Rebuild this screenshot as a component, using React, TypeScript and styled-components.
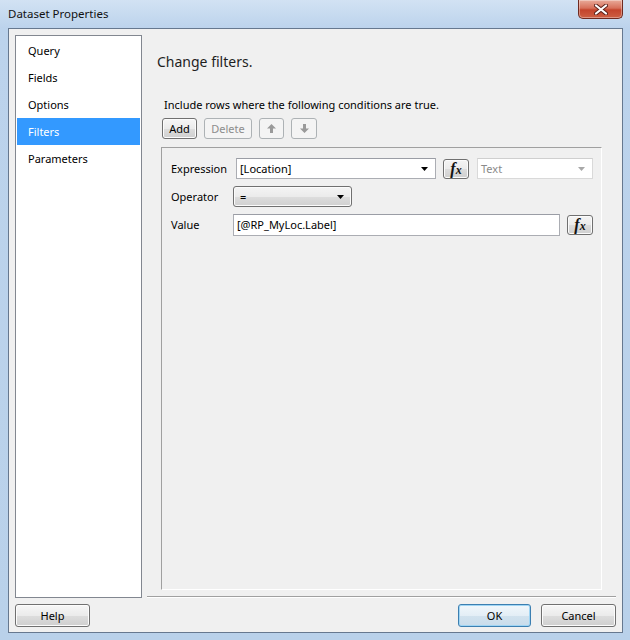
import styled, { createGlobalStyle } from "styled-components";

const GlobalStyle = createGlobalStyle`
  html, body {
    margin: 0;
    padding: 0;
  }

  body {
    width: 630px;
    height: 640px;
    overflow: hidden;
    background: #c3d8ee;
    font-family: "Noto Sans", "Segoe UI", "Liberation Sans", sans-serif;
    font-size: 11px;
    color: #000;
  }
`;

const Window = styled.div`
  box-sizing: border-box;
  width: 630px;
  height: 640px;
  display: flex;
  flex-direction: column;
  padding: 0 7px 7px 8px;
  background: linear-gradient(180deg, #d2e2f3 0px, #bcd3ec 28px, #b9d1ea 100%);
`;

const TitleBar = styled.div`
  height: 28px;
  display: flex;
  justify-content: space-between;
  align-items: flex-start;

  .title {
    margin-top: 6px;
    line-height: 16px;
    font-size: 11.5px;
    color: #111;
  }
`;

const CloseButton = styled.div`
  box-sizing: border-box;
  width: 45px;
  height: 19px;
  display: flex;
  align-items: center;
  justify-content: center;
  border: 1px solid #6f2a20;
  border-top: none;
  border-radius: 0 0 5px 5px;
  background: linear-gradient(180deg, #e9ab9a 0%, #d7705a 45%, #c4442c 55%, #cd5f43 100%);
  box-shadow: inset 0 0 0 1px rgba(255, 255, 255, 0.35);
`;

const Client = styled.div`
  flex: 1;
  display: flex;
  flex-direction: column;
  border: 1px solid #66788f;
  background: #f0f0f0;
  padding: 6px 6px 5px 6px;
  min-height: 0;
`;

const Main = styled.div`
  flex: 1;
  display: flex;
  min-height: 0;
`;

const Nav = styled.ul`
  box-sizing: border-box;
  flex-shrink: 0;
  width: 127px;
  margin: 0;
  padding: 1px;
  list-style: none;
  background: #fff;
  border: 1px solid #828790;
`;

const NavItem = styled.li<{ $active?: boolean }>`
  height: 27px;
  line-height: 27px;
  padding-left: 11px;
  background: ${(props) => (props.$active ? "#3399ff" : "transparent")};
  color: ${(props) => (props.$active ? "#fff" : "#000")};
`;

const Content = styled.div`
  flex: 1;
  min-width: 0;
  display: flex;
  flex-direction: column;
  margin-left: 5px;
`;

const Heading = styled.h1`
  margin: 17px 0 0 10px;
  font-size: 14px;
  font-weight: normal;
  line-height: 20px;
  color: #1e1e1e;
`;

const Section = styled.div`
  flex: 1;
  min-width: 0;
  display: flex;
  flex-direction: column;
  margin: 0 14px 0 14px;
`;

const Caption = styled.div`
  margin-top: 25px;
  padding-left: 3px;
  line-height: 16px;
`;

const Toolbar = styled.div`
  display: flex;
  gap: 7px;
  margin-top: 5px;
  padding-left: 1px;
`;

const Button = styled.button<{ $width: number; $disabled?: boolean; $default?: boolean }>`
  box-sizing: border-box;
  width: ${(props) => props.$width}px;
  height: ${(props) => (props.$width > 60 ? 23 : 21)}px;
  display: flex;
  align-items: center;
  justify-content: center;
  padding: 0;
  font-family: inherit;
  font-size: 11px;
  border-radius: 3px;
  color: ${(props) => (props.$disabled ? "#8d8d8d" : "#000")};
  border: 1px solid
    ${(props) => (props.$disabled ? "#adb2b5" : props.$default ? "#3c7fb1" : "#707070")};
  background: ${(props) =>
    props.$disabled
      ? "#f4f4f4"
      : props.$default
      ? "linear-gradient(180deg, #f1f7fb 0%, #e3eef6 50%, #d1e2ee 51%, #c9dceb 100%)"
      : "linear-gradient(180deg, #f6f6f6 0%, #ebebeb 50%, #dddddd 51%, #cfcfcf 100%)"};
  box-shadow: ${(props) =>
    props.$disabled ? "none" : props.$default ? "inset 0 0 0 1px #9fd5f4" : "inset 0 0 0 1px #fcfcfc"};
`;

const Panel = styled.div`
  flex: 1;
  margin-top: 8px;
  padding: 10px 8px 0 9px;
  border-top: 1px solid #a0a0a0;
  border-left: 1px solid #a0a0a0;
  border-bottom: 1px solid #fff;
  border-right: 1px solid #fff;
  display: flex;
  flex-direction: column;
  gap: 7px;
`;

const Row = styled.div`
  display: flex;
  align-items: center;
  height: 21px;
`;

const Label = styled.span`
  width: 62px;
  flex-shrink: 0;
`;

const Combo = styled.div<{ $width: number; $disabled?: boolean; $gap?: number }>`
  box-sizing: border-box;
  flex-shrink: 0;
  width: ${(props) => props.$width}px;
  height: 21px;
  margin-left: ${(props) => props.$gap ?? 0}px;
  display: flex;
  align-items: center;
  justify-content: space-between;
  padding: 0 7px 0 3px;
  background: #fff;
  border: 1px solid ${(props) => (props.$disabled ? "#d9d9d9" : "#abadb3")};
  border-top-color: ${(props) => (props.$disabled ? "#cfcfcf" : "#9a9da5")};
  color: ${(props) => (props.$disabled ? "#8a8a8a" : "#000")};
`;

const DropButton = styled.div<{ $width: number }>`
  box-sizing: border-box;
  width: ${(props) => props.$width}px;
  height: 21px;
  display: flex;
  align-items: center;
  justify-content: space-between;
  padding: 0 7px 0 6px;
  border: 1px solid #707070;
  border-radius: 3px;
  background: linear-gradient(180deg, #f4f4f4 0%, #ebebeb 50%, #dddddd 51%, #d0d0d0 100%);
  box-shadow: inset 0 0 0 1px #fbfbfb;
`;

const TextInput = styled.div<{ $width: number }>`
  box-sizing: border-box;
  width: ${(props) => props.$width}px;
  height: 22px;
  display: flex;
  align-items: center;
  padding: 0 3px;
  background: #fff;
  border: 1px solid #abadb3;
  border-top-color: #9a9da5;
`;

const FxButton = styled.div<{ $gap: number }>`
  box-sizing: border-box;
  flex-shrink: 0;
  width: 26px;
  height: 20px;
  margin-left: ${(props) => props.$gap}px;
  display: flex;
  align-items: center;
  justify-content: center;
  border: 1px solid #707070;
  border-radius: 3px;
  background: linear-gradient(180deg, #f4f4f4 0%, #ebebeb 50%, #dddddd 51%, #cfcfcf 100%);
  box-shadow: inset 0 0 0 1px #fbfbfb;
  font-family: "Liberation Serif", "DejaVu Serif", serif;
  font-style: italic;
  font-weight: bold;
  color: #111;

  .f {
    font-size: 16px;
    line-height: 15px;
  }

  .x {
    font-size: 12px;
    line-height: 11px;
    margin-top: 3px;
  }
`;

const Separator = styled.div`
  margin-top: 6px;
  height: 1px;
  background: #a0a0a0;
  border-bottom: 1px solid #fff;
`;

const Footer = styled.div`
  display: flex;
  align-items: center;
  margin-top: 6px;

  .spacer {
    flex: 1;
  }

  .actions {
    display: flex;
    gap: 10px;
  }
`;

const Arrow = ({ color = "#000" }: { color?: string }) => (
  <svg width="7" height="4" viewBox="0 0 7 4">
    <polygon points="0,0 7,0 3.5,4" fill={color} />
  </svg>
);

const MoveIcon = ({ down }: { down?: boolean }) => (
  <svg width="9" height="9" viewBox="0 0 9 9" style={down ? { transform: "rotate(180deg)" } : undefined}>
    <polygon points="4.5,0 9,4.5 6,4.5 6,9 3,9 3,4.5 0,4.5" fill="#9a9a9a" />
  </svg>
);

const CloseIcon = () => (
  <svg width="14" height="11" viewBox="0 0 14 11">
    <path d="M2 1.5 L12 9.5 M12 1.5 L2 9.5" stroke="#5a2019" strokeWidth="4" strokeLinecap="round" />
    <path d="M2 1.5 L12 9.5 M12 1.5 L2 9.5" stroke="#fff" strokeWidth="2.2" strokeLinecap="round" />
  </svg>
);

const Fx = ({ gap }: { gap: number }) => (
  <FxButton $gap={gap}>
    <span className="f">f</span>
    <span className="x">x</span>
  </FxButton>
);

const pages = ["Query", "Fields", "Options", "Filters", "Parameters"];

const App = () => {
  return (
    <Window>
      <GlobalStyle />
      <TitleBar>
        <span className="title">Dataset Properties</span>
        <CloseButton>
          <CloseIcon />
        </CloseButton>
      </TitleBar>
      <Client>
        <Main>
          <Nav>
            {pages.map((page) => (
              <NavItem key={page} $active={page === "Filters"}>
                {page}
              </NavItem>
            ))}
          </Nav>
          <Content>
            <Heading>Change filters.</Heading>
            <Section>
              <Caption>Include rows where the following conditions are true.</Caption>
              <Toolbar>
                <Button $width={35}>Add</Button>
                <Button $width={48} $disabled>
                  Delete
                </Button>
                <Button $width={25} $disabled>
                  <MoveIcon />
                </Button>
                <Button $width={26} $disabled>
                  <MoveIcon down />
                </Button>
              </Toolbar>
              <Panel>
                <Row>
                  <Label>Expression</Label>
                  <Combo $width={200} $gap={3}>
                    <span>[Location]</span>
                    <Arrow />
                  </Combo>
                  <Fx gap={7} />
                  <Combo $width={116} $gap={8} $disabled>
                    <span>Text</span>
                    <Arrow color="#a8a8a8" />
                  </Combo>
                </Row>
                <Row>
                  <Label>Operator</Label>
                  <DropButton $width={119}>
                    <span>=</span>
                    <Arrow />
                  </DropButton>
                </Row>
                <Row>
                  <Label>Value</Label>
                  <TextInput $width={328}>[@RP_MyLoc.Label]</TextInput>
                  <Fx gap={7} />
                </Row>
              </Panel>
            </Section>
            <Separator />
          </Content>
        </Main>
        <Footer>
          <Button $width={75}>Help</Button>
          <span className="spacer" />
          <div className="actions">
            <Button $width={73} $default>
              OK
            </Button>
            <Button $width={75}>Cancel</Button>
          </div>
        </Footer>
      </Client>
    </Window>
  );
};

export default App;
